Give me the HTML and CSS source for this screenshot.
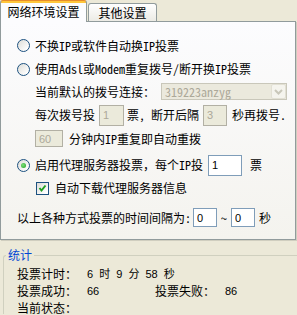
FILE: index.html
```html
<!DOCTYPE html>
<html lang="zh-CN">
  <head>
    <meta charset="UTF-8" />
    <title>网络环境设置</title>
    <link rel="stylesheet" href="styles.css">
  </head>
  <body>
    <div class="dlg">
      <div class="tabs">
        <div class="tab active">网络环境设置</div>
        <div class="tab">其他设置</div>
      </div>
      <div class="pane">
        <div class="row r1"><span class="radio"></span>不换IP或软件自动换IP投票</div>
        <div class="row r2"><span class="radio"></span>使用Adsl或Modem重复拨号/断开换IP投票</div>
        <div class="row sub r3">当前默认的拨号连接：<span class="combo">319223anzyg<span class="combo-btn"><svg width="9" height="6" viewBox="0 0 9 6"><polyline points="1,1 4.5,4.5 8,1" fill="none" stroke="#c9c7ba" stroke-width="2"/></svg></span></span></div>
        <div class="row sub r4">每次拨号投<input class="box dis w25" value="1" disabled>票, 断开后隔<input class="box dis w24 b2" value="3" disabled>秒再拨号.</div>
        <div class="row sub r5"><input class="box dis w28 h17" value="60" disabled>分钟内IP重复即自动重拨</div>
        <div class="row r6"><span class="radio on"></span>启用代理服务器投票，每个IP投<input class="box w34" value="1">票</div>
        <div class="row sub r7"><span class="check"><svg width="11" height="11" viewBox="0 0 11 11"><polyline points="2.5,5 4.5,7.5 8.5,2.5" fill="none" stroke="#21a121" stroke-width="2"/></svg></span>自动下载代理服务器信息</div>
        <div class="row r8">以上各种方式投票的时间间隔为:<input class="box w24 h19 i1" value="0"><span class="tilde">~</span><input class="box w24 h19" value="0"><span class="sec">秒</span></div>
      </div>
      <fieldset class="stats">
        <legend>统计</legend>
        <div class="srow"><span class="lbl">投票计时：</span><span class="val">6 时 9 分 58 秒</span></div>
        <div class="srow"><span class="lbl">投票成功：</span><span class="val num">66</span><span class="lbl">投票失败：</span><span class="val">86</span></div>
        <div class="srow"><span class="lbl">当前状态：</span></div>
      </fieldset>
    </div>
  </body>
</html>
```

FILE: styles.css
```css
* {
  margin: 0;
  padding: 0;
  box-sizing: border-box;
}
body {
  width: 297px;
  height: 315px;
  overflow: hidden;
  background: #ece9d8;
  font-family: "Noto Sans Mono CJK SC", "Noto Sans CJK SC", sans-serif;
  font-size: 12px;
  line-height: 14px;
  color: #000;
}
.dlg {
  width: 297px;
}

/* tabs */
.tabs {
  display: flex;
  align-items: flex-end;
  height: 21px;
  position: relative;
  z-index: 1;
}
.tab {
  height: 18px;
  width: 69px;
  margin-left: 1px;
  border: 1px solid #919b9c;
  border-bottom: none;
  border-radius: 3px 3px 0 0;
  background: linear-gradient(#ffffff, #ecebe5);
  text-align: center;
  line-height: 17px;
}
.tab.active {
  width: 87px;
  height: 22px;
  margin-left: 0;
  margin-bottom: -1px;
  border-top-color: #e68b2c;
  background: linear-gradient(#ffc73c 0, #ffc73c 2px, #fcfcfe 2px);
  padding-top: 3px;
  line-height: 16px;
}

/* pane */
.pane {
  width: 296px;
  height: 219px;
  border: 1px solid #919b9c;
  background: linear-gradient(#fcfcfe, #f4f3ee);
  box-shadow: 1px 1px 0 #d0cebf;
  padding: 12px 0 0 16px;
}
.row {
  display: flex;
  align-items: center;
  white-space: nowrap;
}
.row.sub {
  padding-left: 18px;
}
.r1 { height: 23px; }
.r2 { height: 24px; }
.r3 { height: 21px; }
.r4 { height: 26px; }
.r5 { height: 21px; }
.r6 { height: 22px; margin-top: 5px; }
.r7 { height: 22px; margin-top: 1px; }
.r8 { height: 21px; margin-top: 8px; }

.radio {
  width: 13px;
  height: 13px;
  margin-right: 5px;
  border: 1px solid #1c5180;
  border-radius: 50%;
  background: linear-gradient(135deg, #dcdcd7, #ffffff 85%);
  display: flex;
  align-items: center;
  justify-content: center;
}
.radio.on::after {
  content: "";
  width: 5px;
  height: 5px;
  border-radius: 50%;
  background: radial-gradient(circle at 40% 40%, #7fe07c, #21a121);
}
.check {
  width: 13px;
  height: 13px;
  margin: 0 6px 0 1px;
  border: 1px solid #1c5180;
  background: linear-gradient(135deg, #dcdcd7, #ffffff 85%);
  display: flex;
}

.combo {
  position: relative;
  width: 126px;
  height: 17px;
  margin-left: 6px;
  border: 1px solid #c9c7ba;
  background: #ebe9dd;
  color: #aca899;
  padding-left: 3px;
  line-height: 15px;
}
.combo-btn {
  position: absolute;
  right: 0;
  top: 0;
  width: 15px;
  height: 15px;
  border: 1px solid #e2e0d4;
  border-radius: 2px;
  background: #f5f4ee;
  display: flex;
  align-items: center;
  justify-content: center;
}

.box {
  height: 21px;
  border: 1px solid #7f9db9;
  background: #fff;
  font-family: "Liberation Sans", sans-serif;
  font-size: 11px;
  color: #000;
  padding: 0 3px;
  outline: none;
}
.box.dis {
  border-color: #b2b0a4;
  background: #ebeadb;
  color: #aca899;
}
.w24 { width: 24px; }
.w25 { width: 25px; margin: 0 3px 0 4px; }
.b2 { margin: 0 5px 0 4px; }
.w28 { width: 28px; margin-right: 6px; }
.w34 { width: 34px; margin: 0 8px 0 5px; }
.h17 { height: 17px; }
.h19 { height: 19px; }
.i1 { margin-left: 2px; }
.tilde {
  margin: 0 4px;
}
.sec {
  margin-left: 4px;
}

/* statistics group, cut off by the window on the right and bottom */
.stats {
  width: 294px;
  height: 67px;
  margin: 7px 0 0 3px;
  border: 1px solid #d0d0bf;
  border-right: none;
  border-bottom: none;
  border-radius: 3px 0 0 0;
  padding: 0 0 0 2px;
}
.stats legend {
  color: #0046d5;
  padding: 0 2px;
  line-height: 16px;
}
.srow {
  display: flex;
  align-items: center;
  height: 17px;
  padding-left: 11px;
}
.srow:first-of-type {
  margin-top: 2px;
}
.lbl {
  width: 70px;
}
.val {
  font-family: "Liberation Sans", "Noto Sans CJK SC", sans-serif;
  font-size: 11px;
  word-spacing: 3px;
}
.val.num {
  width: 68px;
}
```
